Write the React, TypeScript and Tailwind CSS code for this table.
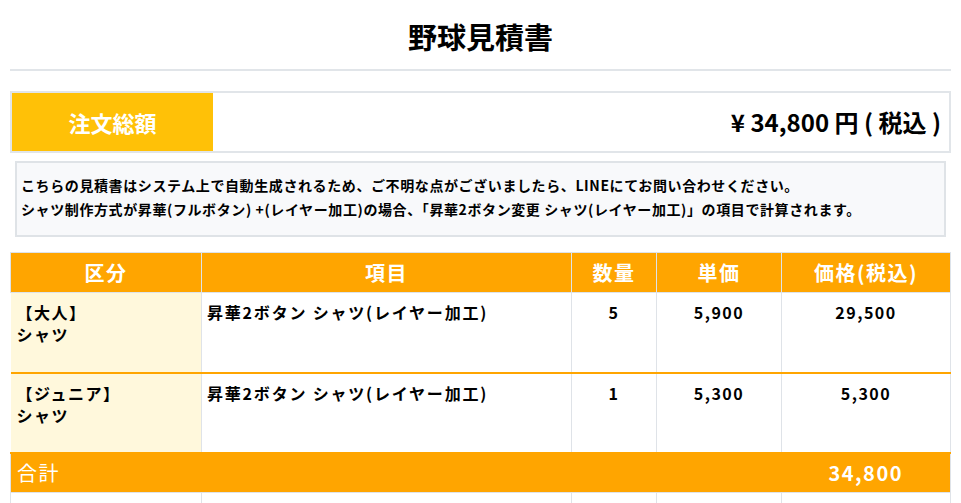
import React from "react";

const rows = [
  { cat: ["【大人】", "シャツ"], item: "昇華2ボタン シャツ(レイヤー加工)", qty: "5", unit: "5,900", price: "29,500" },
  { cat: ["【ジュニア】", "シャツ"], item: "昇華2ボタン シャツ(レイヤー加工)", qty: "1", unit: "5,300", price: "5,300" },
];

export default function App() {
  return (
    <div
      className="w-[961px] h-[503px] overflow-hidden bg-white px-[10px] text-black"
      style={{ fontFamily: '"Noto Sans CJK JP", "Noto Sans", sans-serif' }}
    >
      <div className="pt-[16px] h-[56px] text-center text-[29px] font-bold leading-[40px]">野球見積書</div>
      <div className="mt-[13px] h-[2px] bg-[#e1e5e9]" />

      <div className="mt-[20px] flex h-[62px] border-2 border-[#e1e5e9]">
        <div className="flex w-[201px] items-center justify-center bg-[#ffc107] text-[22px] font-bold text-white">
          注文総額
        </div>
        <div className="flex flex-1 items-center justify-end pr-[8px] text-[24px] font-bold">
          ¥ 34,800 円 ( 税込 )
        </div>
      </div>

      <div className="mx-[5px] mt-[8px] h-[76px] border-2 border-[#dfe3e7] bg-[#f8f9fb] pl-[4px] pt-[10px] text-[14px] font-bold leading-[24px] tracking-[0.6px]">
        <div>こちらの見積書はシステム上で自動生成されるため、ご不明な点がございましたら、LINEにてお問い合わせください。</div>
        <div>シャツ制作方式が昇華(フルボタン) +(レイヤー加工)の場合、「昇華2ボタン変更 シャツ(レイヤー加工)」の項目で計算されます。</div>
      </div>

      <table className="mt-[15px] w-[940px] table-fixed border-collapse tracking-[1.5px]">
        <colgroup>
          <col className="w-[191px]" />
          <col className="w-[370px]" />
          <col className="w-[85px]" />
          <col className="w-[125px]" />
          <col className="w-[169px]" />
        </colgroup>
        <thead>
          <tr className="h-[40px] bg-[#ffa500] text-[20px] font-bold text-white">
            {["区分", "項目", "数量", "単価", "価格(税込)"].map((h) => (
              <th key={h} className="border border-[#dde3ea] p-0 text-center font-bold">
                {h}
              </th>
            ))}
          </tr>
        </thead>
        <tbody>
          {rows.map((r, i) => (
            <tr key={i} className="h-[80px] border-b-2 border-[#ffa500] align-top text-[16px] font-bold leading-[22px]">
              <td className="bg-[#fff8dc] pl-[6px] pt-[8px]">
                <div>{r.cat[0]}</div>
                <div>{r.cat[1]}</div>
              </td>
              <td className="border-x border-[#dfe3e8] pl-[5px] pt-[8px] tracking-[1.8px]">{r.item}</td>
              <td className="border-x border-[#dfe3e8] pt-[8px] text-center">{r.qty}</td>
              <td className="border-x border-[#dfe3e8] pt-[8px] text-center">{r.unit}</td>
              <td className="border-x border-[#dfe3e8] pt-[8px] text-center">{r.price}</td>
            </tr>
          ))}
          <tr className="h-[40px] bg-[#ffa500] text-[20px] font-bold text-white">
            <td colSpan={4} className="border-y border-l border-[#dfe3e8] pl-[6px] font-normal">合計</td>
            <td className="border-y border-r border-[#dfe3e8] text-center">34,800</td>
          </tr>
          <tr className="h-[40px]">
            <td className="border border-[#dfe3e8]" />
            <td className="border border-[#dfe3e8]" />
            <td className="border border-[#dfe3e8]" />
            <td className="border border-[#dfe3e8]" />
            <td className="border border-[#dfe3e8]" />
          </tr>
        </tbody>
      </table>
    </div>
  );
}
